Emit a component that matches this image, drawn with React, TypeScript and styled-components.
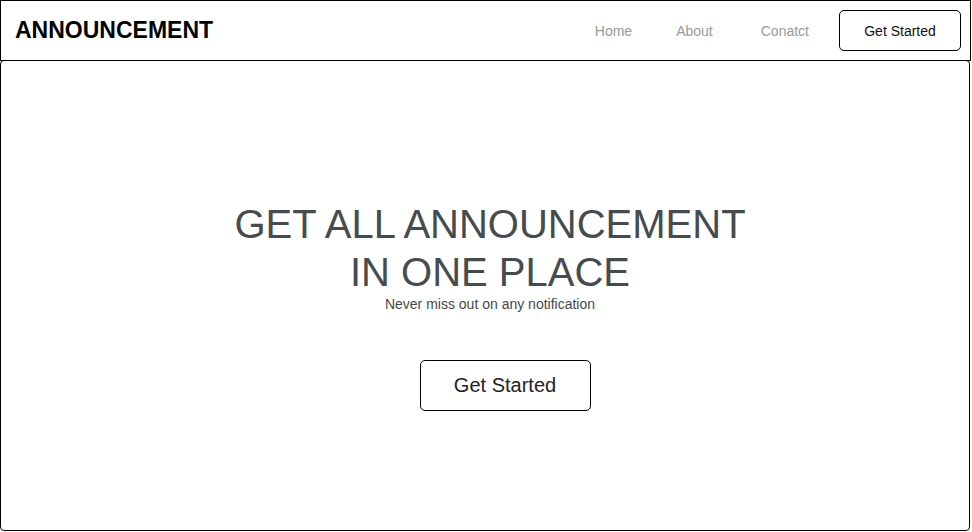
import React from "react";
import styled, { createGlobalStyle } from "styled-components";

const Global = createGlobalStyle`
  html, body {
    margin: 0;
    padding: 0;
    background: #ffffff;
    font-family: Arial, "Liberation Sans", Helvetica, sans-serif;
  }
  * { box-sizing: border-box; }
`;

const Page = styled.div`
  width: 971px;
  display: flex;
  flex-direction: column;
`;

const Header = styled.header`
  height: 61px;
  border: 1px solid #000;
  display: flex;
  align-items: center;
  padding: 0 9px 0 14px;
`;

const Logo = styled.div`
  font-size: 23px;
  font-weight: 700;
  color: #000;
  flex: 1;
`;

const Nav = styled.nav`
  display: flex;
  align-items: center;
`;

const NavLink = styled.a<{ $wide?: boolean }>`
  font-size: 14px;
  color: #999999;
  text-decoration: none;
  padding: 0 22px 0 ${(p) => (p.$wide ? 26 : 22)}px;
  line-height: 16px;
`;

const HeaderButton = styled.button`
  margin-left: 8px;
  height: 41px;
  width: 122px;
  border: 1px solid #000;
  border-radius: 5px;
  background: #fff;
  font-family: inherit;
  font-size: 14px;
  color: #111;
  cursor: pointer;
`;

const Main = styled.main`
  margin-top: -1px;
  width: 970px;
  height: 471px;
  border: 1px solid #000;
  border-radius: 4px;
  display: flex;
  flex-direction: column;
  align-items: center;
  padding-top: 139px;
`;

const Title = styled.h1`
  margin: 0 0 0 10px;
  font-size: 40px;
  font-weight: 400;
  line-height: 48px;
  color: #464c4e;
  text-align: center;
`;

const Subtitle = styled.p`
  margin: 0 0 0 10px;
  font-size: 14px;
  line-height: 16px;
  color: #444a4c;
`;

const HeroButton = styled.button`
  margin: 48px 0 0 40px;
  width: 171px;
  height: 51px;
  border: 1px solid #000;
  border-radius: 5px;
  background: #fff;
  font-family: inherit;
  font-size: 20px;
  color: #222;
  cursor: pointer;
`;

export default function App() {
  return (
    <Page>
      <Global />
      <Header>
        <Logo>ANNOUNCEMENT</Logo>
        <Nav>
          <NavLink href="#">Home</NavLink>
          <NavLink href="#">About</NavLink>
          <NavLink href="#" $wide>Conatct</NavLink>
          <HeaderButton>Get Started</HeaderButton>
        </Nav>
      </Header>
      <Main>
        <Title>
          GET ALL ANNOUNCEMENT
          <br />
          IN ONE PLACE
        </Title>
        <Subtitle>Never miss out on any notification</Subtitle>
        <HeroButton>Get Started</HeroButton>
      </Main>
    </Page>
  );
}
